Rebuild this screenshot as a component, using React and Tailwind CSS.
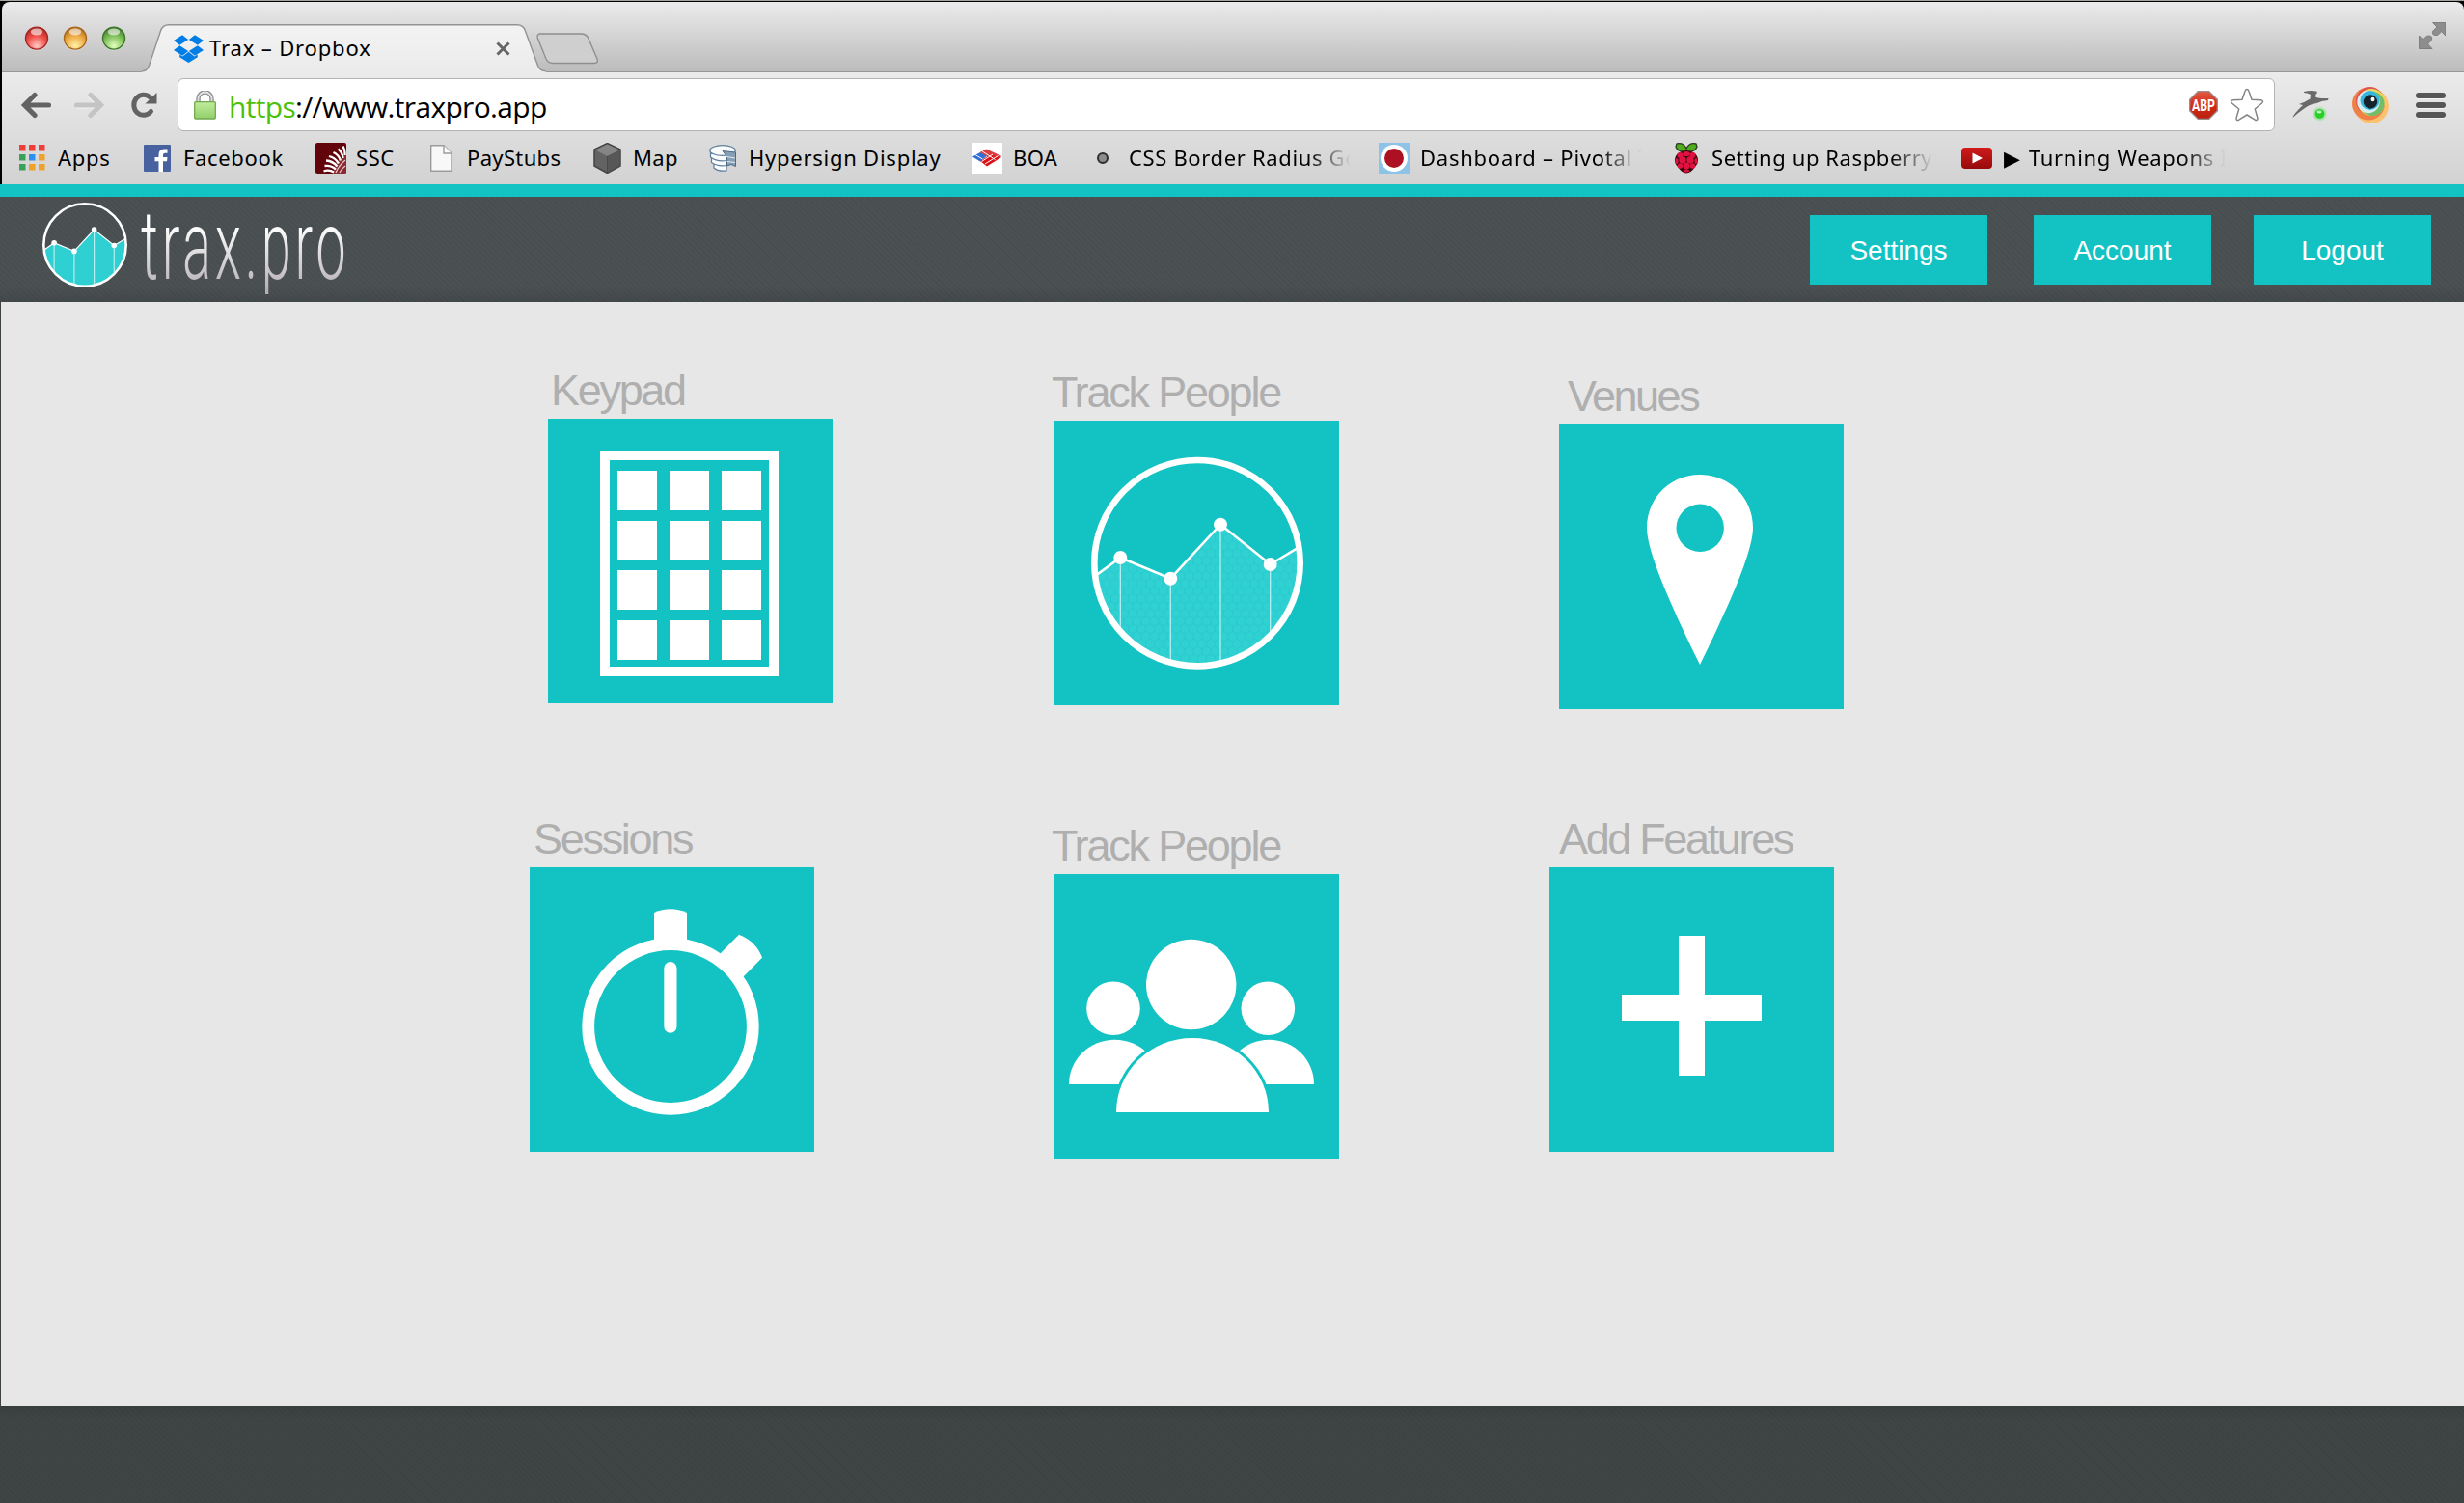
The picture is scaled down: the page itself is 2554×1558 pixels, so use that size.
import React from "react";

/* ---------- browser chrome icons ---------- */

const TrafficLight = ({ id, dark, mid, light }) => (
  <svg className="h-[26px] w-[26px]" viewBox="0 0 26 26">
    <defs>
      <radialGradient id={id} cx="50%" cy="85%" r="85%">
        <stop offset="0" stopColor={light} />
        <stop offset="0.55" stopColor={mid} />
        <stop offset="1" stopColor={dark} />
      </radialGradient>
    </defs>
    <circle cx="13" cy="13.6" r="12" fill="#fff" opacity="0.4" />
    <circle cx="13" cy="12.6" r="11.5" fill={`url(#${id})`} stroke={dark} strokeWidth="1.4" />
    <ellipse cx="13" cy="6" rx="6.2" ry="3.4" fill="#fff" opacity="0.6" />
  </svg>
);

const DropboxIcon = () => (
  <svg className="h-[29px] w-[31px]" viewBox="0 0 31 29" fill="#007ee5">
    <path d="M9 .2 15.2 5 6.2 10.8 0 6Z" />
    <path d="M22 .2 31 6 24.8 10.8 15.8 5Z" />
    <path d="M6.2 11.2 15.2 17 9 21.8 0 16Z" />
    <path d="M24.8 11.2 31 16 22 21.8 15.8 17Z" />
    <path d="M15.5 17.8 21.6 22.6 24.8 20.6V23.2L15.5 29 6.2 23.2V20.6L9.3 22.6Z" />
  </svg>
);

const TabShape = () => (
  <svg className="absolute inset-0 h-[50px] w-[419px]" viewBox="0 0 419 50">
    <defs>
      <linearGradient id="tabFill" x1="0" y1="0" x2="0" y2="1">
        <stop offset="0" stopColor="#f3f3f3" />
        <stop offset="1" stopColor="#ebebeb" />
      </linearGradient>
    </defs>
    <path
      d="M0 48.8C5 48.8 6.500 46 7.500 43L19.500 7C21 2.500 23.500.800 28 .800H389C393.500.800 396 2.500 397.500 7L410.500 43C412 47 414 48.800 419 48.800V50H0Z"
      fill="url(#tabFill)"
    />
    <path
      d="M0 48.8C5 48.8 6.500 46 7.500 43L19.500 7C21 2.500 23.500.800 28 .800H389C393.500.800 396 2.500 397.500 7L410.500 43C412 47 414 48.800 419 48.800"
      fill="none"
      stroke="#939393"
      strokeWidth="1.4"
    />
  </svg>
);

const NewTabShape = () => (
  <svg className="h-[33px] w-[65px]" viewBox="0 0 65 33">
    <path
      d="M4 1H46Q52 1 54 6L63 27Q64.500 31.500 60 31.500H17Q12 31.500 10 27L1.500 6Q0 1 4 1Z"
      fill="#cfcfcf"
      stroke="#8f8f8f"
      strokeWidth="1.4"
    />
  </svg>
);

const FullscreenIcon = () => (
  <svg className="h-7 w-7" viewBox="0 0 28 28" fill="#8d8d8d" stroke="#747474" strokeWidth="0.8">
    <path d="M28 .5V14L23.700 9.800 19.500 13.500Q16 14 14.800 12.500 14 11 14.800 9L19 5 14.500.500Z" />
    <path d="M.5 27.500V14L4.500 18 8.500 14.300Q12 13.500 13.300 15 14 17 13.300 18.500L9.500 22.800 14 27.500Z" />
  </svg>
);

const ArrowIcon = ({ flip, color, highlight }) => (
  <svg className={flip ? "h-7 w-[31px] -scale-x-100" : "h-7 w-[31px]"} viewBox="0 0 31 28">
    <path d="M14.500 4.500 4 15l10.500 10.500M5 15h24" fill="none" stroke={highlight} strokeWidth="5" />
    <path
      d="M14 3.500 3.500 14 14 24.500M4.500 14h24"
      fill="none"
      stroke={color}
      strokeWidth="5.200"
      strokeLinecap="round"
    />
  </svg>
);

const ReloadIcon = () => (
  <svg className="h-7 w-7" viewBox="0 0 28 28">
    <path d="M21.500 20.500A10 10.500 0 1 1 20.500 6" fill="none" stroke="#636363" strokeWidth="5" strokeLinecap="round" />
    <path d="M27.500 1V12.500H15.500Z" fill="#636363" />
  </svg>
);

const LockIcon = () => (
  <svg className="h-[30px] w-[23px]" viewBox="0 0 23 30">
    <defs>
      <linearGradient id="lockFill" x1="0" y1="0" x2="0" y2="1">
        <stop offset="0" stopColor="#c0ec9d" />
        <stop offset="1" stopColor="#92cf6b" />
      </linearGradient>
    </defs>
    <path d="M4.500 13V8.500a7 7 0 0 1 14 0V13" fill="none" stroke="#8e8e8e" strokeWidth="4.400" />
    <path d="M4.500 13V8.500a7 7 0 0 1 14 0V13" fill="none" stroke="#e2e2e2" strokeWidth="1.800" />
    <rect x=".7" y="11.700" width="21.600" height="17.300" rx="1" fill="url(#lockFill)" stroke="#6fa94d" strokeWidth="1.300" />
  </svg>
);

const AbpIcon = () => (
  <svg className="h-8 w-8" viewBox="0 0 32 32">
    <defs>
      <linearGradient id="abpFill" x1="0" y1="0" x2="0" y2="1">
        <stop offset="0" stopColor="#e2553f" />
        <stop offset="0.6" stopColor="#cf2812" />
        <stop offset="1" stopColor="#b92310" />
      </linearGradient>
    </defs>
    <path d="M10 1h12l9 9v12l-9 9H10l-9-9V10Z" fill="#9a8f8f" />
    <path d="M10.600 2.300h10.800l8.300 8.300v10.800l-8.300 8.300H10.600l-8.300-8.300V10.600Z" fill="url(#abpFill)" />
    <text
      x="16"
      y="21.500"
      textAnchor="middle"
      textLength="24"
      lengthAdjust="spacingAndGlyphs"
      fill="#fff"
      className="font-['Roboto',sans-serif] text-[16.5px] font-bold"
    >
      ABP
    </text>
  </svg>
);

const StarIcon = () => (
  <svg className="h-[35px] w-9" viewBox="0 0 36 35">
    <path
      d="M18 1.500Q19.500 1.500 20.200 4L23 12.200 32.500 12.700Q36 13.500 33.500 16L26.300 22 29 31.500Q29 34.500 26.300 33.200L18 28 9.700 33.200Q7 34.500 7 31.500L9.700 22 2.500 16Q0 13.500 3.500 12.700L13 12.200 15.800 4Q16.500 1.500 18 1.500Z"
      fill="#fff"
      stroke="#858585"
      strokeWidth="1.500"
    />
  </svg>
);

const BirdIcon = () => (
  <svg className="h-[34px] w-[38px]" viewBox="0 0 38 34">
    <defs>
      <radialGradient id="birdGlow">
        <stop offset="0.5" stopColor="#4de34d" stopOpacity="0.7" />
        <stop offset="1" stopColor="#4de34d" stopOpacity="0" />
      </radialGradient>
    </defs>
    <path
      d="M12 2Q18 .5 25 1.500 27 3 24.500 4.500L24 7.500Q28 9.500 37.500 9L37 11Q30 11.500 25.500 14 18 15 13 19 7 23 .5 29 .5 26 11 16L7 15Q13 13 18.500 9.500L19 5Q17 3.500 12 3Z"
      fill="#6a6a6a"
    />
    <circle cx="28.500" cy="25" r="8" fill="url(#birdGlow)" />
    <circle cx="28.500" cy="25" r="4.800" fill="#27cf27" />
    <ellipse cx="28" cy="23" rx="2.500" ry="1.400" fill="#c9ffc2" />
  </svg>
);

const EyeIcon = () => (
  <svg className="h-[38px] w-[38px]" viewBox="0 0 38 38">
    <circle cx="20" cy="20" r="18" fill="#fbc36f" />
    <circle cx="17" cy="17.500" r="17" fill="#ef8148" />
    <circle cx="18.500" cy="14.500" r="14.500" fill="#e4524f" />
    <circle cx="20" cy="16" r="14" fill="#e8d75b" />
    <circle cx="21" cy="17.500" r="12.500" fill="#71bd68" />
    <circle cx="17" cy="15.500" r="11.700" fill="#d5edf3" />
    <circle cx="18.500" cy="14" r="10" fill="#35b5da" />
    <circle cx="19" cy="15.500" r="7.200" fill="#17232b" />
    <ellipse cx="21.500" cy="13" rx="2" ry="2.300" fill="#fff" />
  </svg>
);

const MenuIcon = () => (
  <svg className="h-7 w-[31px]" viewBox="0 0 31 28">
    {[1, 11, 21].map((y) => (
      <g key={y}>
        <rect x="0" y={y + 1} width="31" height="6" rx="3" fill="#fff" opacity="0.6" />
        <rect x="0" y={y} width="31" height="6" rx="3" fill="#565656" />
      </g>
    ))}
  </svg>
);

/* ---------- bookmark icons ---------- */

const AppsGrid = () => {
  const colors = ["#f03e3a", "#f03e3a", "#f03e3a", "#3ba059", "#2c8ef0", "#f0a127", "#3ba059", "#f0a127", "#f0a127"];
  return (
    <svg className="h-[27px] w-[27px]" viewBox="0 0 27 27">
      {colors.map((c, i) => (
        <rect key={i} x={(i % 3) * 10} y={Math.floor(i / 3) * 10} width="6.500" height="6.500" fill={c} />
      ))}
    </svg>
  );
};

const FacebookIcon = () => (
  <svg className="h-7 w-7" viewBox="0 0 28 28">
    <rect width="28" height="28" rx="1" fill="#48629f" />
    <path d="M15.500 28V17.300H11.500V13H15.500V10.500Q15.500 4.500 21 4.500H24.500V8.800H22Q20 8.800 20 10.700V13H24.500L24 17.300H20V28Z" fill="#fff" />
  </svg>
);

const SscIcon = () => (
  <svg className="h-8 w-8" viewBox="0 0 32 32">
    <rect width="32" height="32" rx="2" fill="#62040b" />
    <path d="M31 12Q18 20 18 32H32V12Z" fill="#9a3a40" opacity="0.7" />
    <g fill="none" stroke="#fff" strokeWidth="2.300">
      <path d="M8.500 29.500Q14 27.500 19 30.500" />
      <path d="M9.500 24Q16 23 21 27.500" />
      <path d="M11 18.500Q18 19 22.500 24.500" />
      <path d="M14 14Q20.500 15.500 24 21.500" />
      <path d="M18.500 10Q24 12.500 26 18.500" />
      <path d="M23.500 6.500Q28 10 28.500 16" />
      <path d="M28.500 3.500Q31 8 30.500 13" />
    </g>
    <g fill="none" stroke="#e9c9cb" strokeWidth="1.200">
      <path d="M21 31Q24 24 31 18M25 31Q27 27 31 24" />
    </g>
  </svg>
);

const PageIcon = () => (
  <svg className="h-7 w-[23px]" viewBox="0 0 23 28">
    <path d="M.7.700H14L22 9V27.300H.700Z" fill="#f8f8f8" stroke="#9b9b9b" strokeWidth="1.400" />
    <path d="M14 .7V9H22" fill="#fff" stroke="#9b9b9b" strokeWidth="1.400" />
  </svg>
);

const HexIcon = () => (
  <svg className="h-8 w-[29px]" viewBox="0 0 29 32">
    <path d="M14.500.500 28 7V24L14.500 31.500 1 24V7Z" fill="#636363" stroke="#444" strokeWidth="1.500" />
    <path d="M14.500 1.500 27 7.500 14.500 14 2 7.500Z" fill="#858585" />
    <path d="M14.500 14V31L27.500 23.500V7.500Z" fill="#575757" />
    <path d="M14.500 14V31" stroke="#4a4a4a" />
  </svg>
);

const DatabaseIcon = () => (
  <svg className="h-7 w-7" viewBox="0 0 28 28">
    <g fill="#fafbfc" stroke="#5d7f9e" strokeWidth="1.200">
      <path d="M5 19.500V24Q9 28 18 27V21Z" />
      <path d="M2.500 14V18.500Q9 23 18 21.500V15Z" />
      <path d="M1.500 9V13Q8 18 18 16.500V10Z" />
      <ellipse cx="14" cy="6" rx="13.300" ry="5.300" />
    </g>
    <path d="M14 6.500 27.500 8V22.500L23 20.500 18.500 22V12.500Z" fill="#869fb5" stroke="#4c6b88" strokeWidth="1" />
    <path d="M18 12.500 27 14M18.500 17.500 27 18.500" stroke="#e6edf3" strokeWidth="1" />
  </svg>
);

const BoaIcon = () => (
  <svg className="h-8 w-8" viewBox="0 0 32 32">
    <rect width="32" height="32" fill="#fff" />
    <path d="M1 14.500 9 10 16 13.500 9 19.500Z" fill="#2f6fd8" />
    <path d="M8.500 10 15.500 6.500 31.500 14 24 18 Z" fill="#dd3b3f" />
    <path d="M9 19 19 12.500 31 15 16 24.500Z" fill="#d9151b" />
    <path d="M4 12.500 11.500 17M11 8.800 24.500 17.500M10.500 19.500 22 12M14 22 27.500 13.500" stroke="#fff" strokeWidth="1" fill="none" />
  </svg>
);

const DotIcon = () => (
  <svg className="h-3 w-3" viewBox="0 0 12 12">
    <circle cx="6" cy="6" r="5" fill="#8c8c8c" stroke="#2e2e2e" strokeWidth="2" />
  </svg>
);

const PivotalIcon = () => (
  <svg className="h-8 w-8" viewBox="0 0 32 32">
    <rect width="32" height="32" fill="#8cc3e6" />
    <circle cx="16" cy="16" r="14" fill="#fff" />
    <circle cx="16" cy="16" r="10" fill="#ad1022" />
  </svg>
);

const RaspberryIcon = () => (
  <svg className="h-8 w-[26px]" viewBox="0 0 26 32">
    <path d="M13 9Q4 10 2 4L3 1Q10-.5 13 6 16-.5 23 1L24 4Q22 10 13 9Z" fill="#4fae1b" stroke="#2b3c1f" strokeWidth="1.300" />
    <path d="M13 8Q22 9 24 14 27 20 22 25 18 31 13 31.500 8 31 4 25-1 20 2 14 4 9 13 8Z" fill="#3c0712" />
    <g fill="#e0123f">
      <ellipse cx="13" cy="11.500" rx="3.800" ry="2.600" />
      <circle cx="6.500" cy="13" r="3" />
      <circle cx="19.500" cy="13" r="3" />
      <circle cx="9" cy="18" r="3.700" />
      <circle cx="17" cy="18" r="3.700" />
      <ellipse cx="3" cy="19" rx="1.600" ry="3" />
      <ellipse cx="23" cy="19" rx="1.600" ry="3" />
      <circle cx="6.500" cy="24" r="2.700" />
      <circle cx="19.500" cy="24" r="2.700" />
      <circle cx="13" cy="24" r="3.500" />
      <ellipse cx="13" cy="29" rx="3" ry="1.600" />
    </g>
  </svg>
);

const YoutubeIcon = () => (
  <svg className="h-[22px] w-8" viewBox="0 0 32 22">
    <defs>
      <linearGradient id="ytFill" x1="0" y1="0" x2="0" y2="1">
        <stop offset="0" stopColor="#d01b1b" />
        <stop offset="1" stopColor="#960a0a" />
      </linearGradient>
    </defs>
    <rect width="32" height="22" rx="4" fill="url(#ytFill)" />
    <path d="M11.500 5.500V16.500L22 11Z" fill="#fff" />
  </svg>
);

const bookmarks = [
  { label: "Apps", icon: <AppsGrid />, box: "w-[129px]", lead: "w-[40px]", text: "tracking-[0.7px]" },
  { label: "Facebook", icon: <FacebookIcon />, box: "w-[178px]", lead: "w-[41px]", text: "tracking-[0.65px]" },
  { label: "SSC", icon: <SscIcon />, box: "w-[119px]", lead: "w-[42px]", text: "tracking-[0.6px]" },
  { label: "PayStubs", icon: <PageIcon />, box: "w-[169px]", lead: "w-[38px]", text: "tracking-[0.35px]" },
  { label: "Map", icon: <HexIcon />, box: "w-[120px]", lead: "w-[41px]", text: "tracking-[0.3px]" },
  { label: "Hypersign Display", icon: <DatabaseIcon />, box: "w-[272px]", lead: "w-[41px]", text: "tracking-[0.75px]" },
  { label: "BOA", icon: <BoaIcon />, box: "w-[130px]", lead: "w-[43px]", text: "tracking-[0.4px]" },
  { label: "CSS Border Radius Generator", icon: <DotIcon />, box: "w-[292px]", lead: "w-[33px]", text: "tracking-[0.65px]", fade: true },
  { label: "Dashboard – Pivotal Tracker", icon: <PivotalIcon />, box: "w-[306px]", lead: "w-[43px]", text: "tracking-[0.75px]", fade: true },
  { label: "Setting up Raspberry Pi", icon: <RaspberryIcon />, box: "w-[298px]", lead: "w-[39px]", text: "tracking-[0.6px]", fade: true },
  { label: "Turning Weapons Into", icon: <YoutubeIcon />, box: "w-[290px]", lead: "w-[44px]", text: "tracking-[0.7px]", fade: true, play: true },
];

const Bookmark = ({ label, icon, box, lead, text, fade, play }) => (
  <div className={`flex shrink-0 items-center ${box}`}>
    <span className={`flex shrink-0 items-center ${lead}`}>{icon}</span>
    <span
      className={`-mt-[2px] overflow-hidden whitespace-nowrap ${text} ${
        fade ? "w-[232px] [mask-image:linear-gradient(to_right,black_80%,transparent_99%)]" : ""
      }`}
    >
      {play && <span className="mr-[9px] font-['DejaVu_Sans',sans-serif] leading-none tracking-normal">▶</span>}
      {label}
    </span>
  </div>
);

function BrowserChrome() {
  return (
    <div className="bg-black pl-[2px] font-['Noto_Sans',sans-serif] text-[22px] leading-[30px] text-black">
      <div className="-ml-[2px] h-px bg-[#a3a59f]" />
      <div className="h-px bg-black" />
      <div className="flex h-[73px] items-end rounded-t-[8px] border-b border-[#979797] bg-linear-to-b from-[#ebebeb] to-[#bcbcbc]">
        <div className="flex gap-[14px] self-start pt-[25px] pl-[23px]">
          <TrafficLight id="closeLight" dark="#a32622" mid="#f04d48" light="#ffc9c4" />
          <TrafficLight id="minLight" dark="#a9671c" mid="#eeab45" light="#fff2a6" />
          <TrafficLight id="zoomLight" dark="#3d7628" mid="#7fc15a" light="#e2ffbf" />
        </div>
        <div className="relative -mb-px ml-[16px] h-[50px] w-[419px]">
          <TabShape />
          <div className="relative flex h-[50px] items-center pr-[37px] pl-[33px]">
            <DropboxIcon />
            <span className="-mt-[2px] ml-[6px] tracking-[0.85px]">Trax – Dropbox</span>
            <svg className="ml-auto h-[15px] w-[15px]" viewBox="0 0 15 15">
              <path d="M1.500 1.500 13.500 13.500M13.500 1.500 1.500 13.500" stroke="#666" strokeWidth="3" />
            </svg>
          </div>
        </div>
        <div className="-ml-[10px] self-start pt-[32px]">
          <NewTabShape />
        </div>
        <div className="mr-[19px] ml-auto self-start pt-[21px]">
          <FullscreenIcon />
        </div>
      </div>

      <div className="bg-linear-to-b from-[#ebebeb] to-[#d2d2d2]">
        <div className="flex items-center pt-[6px] pl-5">
          <ArrowIcon color="#636363" highlight="#f6f6f6" />
          <div className="ml-[24px]">
            <ArrowIcon flip color="#c4c4c4" highlight="#f4f4f4" />
          </div>
          <div className="ml-[27px]">
            <ReloadIcon />
          </div>
          <div className="ml-[21px] flex h-[55px] w-[2174px] items-center rounded-[6px] border border-[#b3b5b1] bg-white pr-[10px] pl-4">
            <LockIcon />
            <span className="ml-[13px] pt-[5px] font-['Open_Sans',sans-serif] text-[30px] tracking-[-0.68px]">
              <span className="text-[#4cc00a]">https</span>://www.traxpro.app
            </span>
            <div className="ml-auto flex items-center gap-[11px]">
              <AbpIcon />
              <StarIcon />
            </div>
          </div>
          <div className="ml-[18px] pt-[2px]">
            <BirdIcon />
          </div>
          <div className="ml-[24px]">
            <EyeIcon />
          </div>
          <div className="ml-[28px]">
            <MenuIcon />
          </div>
        </div>
        <div className="flex h-[55px] items-center pl-[18px]">
          {bookmarks.map((b) => (
            <Bookmark key={b.label} {...b} />
          ))}
        </div>
      </div>
    </div>
  );
}

/* ---------- application ---------- */

const chartPoints = [
  [68.3, 142],
  [120.3, 163.7],
  [172, 107.7],
  [223.7, 149],
];

const ChartEmblem = ({ id, className, viewBox, ring, line, stem, dot }) => (
  <svg className={className} viewBox={viewBox}>
    <defs>
      <clipPath id={id}>
        <circle cx="148" cy="147.700" r="107" />
      </clipPath>
      <pattern id={`${id}-hex`} width="9" height="15.600" patternUnits="userSpaceOnUse">
        <path d="M0 2.600 4.500 0 9 2.600V7.800L4.500 10.400 0 7.800ZM4.500 10.400V15.600" fill="none" stroke="#25c4c6" strokeWidth="0.600" />
      </pattern>
    </defs>
    <g clipPath={`url(#${id})`}>
      <path d="M38 164 68.300 142 120.300 163.700 172 107.700 223.700 149 258 128.500V260H38Z" fill="#2fd1d3" />
      <path d="M38 164 68.300 142 120.300 163.700 172 107.700 223.700 149 258 128.500V260H38Z" fill={`url(#${id}-hex)`} />
      {chartPoints.map(([x, y]) => (
        <path key={x} d={`M${x} ${y}V260`} stroke="#fff" strokeWidth={stem} opacity="0.650" />
      ))}
      <path d="M38 164 68.300 142 120.300 163.700 172 107.700 223.700 149 258 128.500" fill="none" stroke="#fff" strokeWidth={line} />
    </g>
    {chartPoints.map(([x, y]) => (
      <circle key={x} cx={x} cy={y} r={dot} fill="#fff" />
    ))}
    <circle cx="148" cy="147.700" r={110 - ring / 2} fill="none" stroke="#fff" strokeWidth={ring} />
  </svg>
);

const tileSvg = "block h-[295px] w-[295px]";

const KeypadIcon = () => (
  <svg className={tileSvg} viewBox="0 0 295 295" shapeRendering="crispEdges">
    <rect x="59" y="38" width="175" height="224" fill="none" stroke="#fff" strokeWidth="10" />
    {[54, 106, 157, 209].map((y) =>
      [72, 126, 180].map((x) => <rect key={`${x}-${y}`} x={x} y={y} width="41" height="41" fill="#fff" />)
    )}
  </svg>
);

const PinIcon = () => (
  <svg className={tileSvg} viewBox="0 0 295 295">
    <path
      fillRule="evenodd"
      fill="#fff"
      d="M146 52C176.500 52 201 76 201 107C201 130 180 180 146 249C112 180 91 130 91 107C91 76 115.500 52 146 52ZM146.200 82.500a24.700 24.700 0 1 0 0 49.400a24.700 24.700 0 1 0 0-49.400Z"
    />
  </svg>
);

const StopwatchIcon = () => (
  <svg className={tileSvg} viewBox="0 0 295 295" fill="#fff">
    <circle cx="146" cy="165" r="85.300" fill="none" stroke="#fff" strokeWidth="12.800" />
    <path d="M129 47Q146 39.500 163 47V82H129Z" />
    <path d="M217 69.700Q235 77 241 93.700L220 115 196 91Z" />
    <rect x="139.300" y="98" width="13.200" height="73.700" rx="6.600" />
  </svg>
);

const PeopleIcon = () => (
  <svg className={tileSvg} viewBox="0 0 295 295" fill="#fff">
    <circle cx="61" cy="139.300" r="27.800" />
    <circle cx="221.300" cy="139.300" r="27.800" />
    <path d="M15 218A47.500 46.300 0 0 1 110 218Z" />
    <path d="M176 218A46.500 46.300 0 0 1 269 218Z" />
    <path d="M61 247A82 80 0 0 1 225 247Z" fill="#13c2c2" />
    <circle cx="141.700" cy="114.500" r="46.700" />
    <path d="M64 247A79 77 0 0 1 222 247Z" />
  </svg>
);

const PlusIcon = () => (
  <svg className={tileSvg} viewBox="0 0 295 295" fill="#fff" shapeRendering="crispEdges">
    <rect x="134" y="71" width="27" height="145" />
    <rect x="75" y="132" width="145" height="27" />
  </svg>
);

const Tile = ({ label, place, inset, children }) => (
  <div className={`w-[295px] shrink-0 ${place}`}>
    <div className={`h-[53px] text-[45px] leading-[48px] whitespace-nowrap text-[#afafaf] ${inset}`}>{label}</div>
    <div className="h-[295px] w-[295px] bg-[#13c2c2]">{children}</div>
  </div>
);

const NavButton = ({ children, className = "" }) => (
  <button className={`h-[72px] w-[184px] bg-[#13c2c2] pt-[2px] text-center text-[28px] text-white ${className}`}>{children}</button>
);

const weave =
  "bg-[repeating-linear-gradient(45deg,rgba(0,0,0,0.05)_0px,rgba(0,0,0,0.05)_1px,transparent_1px,transparent_4px)]";

export default function App() {
  return (
    <div className="flex h-[1558px] w-[2554px] flex-col overflow-hidden bg-[#3e4344] font-['Liberation_Sans',Arial,sans-serif]">
      <BrowserChrome />

      <header className="h-[122px] border-t-[13px] border-[#13c2c2] bg-linear-to-b from-[#4b5153] from-85% to-[#43484b]">
        <div className={`flex h-[109px] items-start pr-[34px] pl-[44px] ${weave}`}>
          <ChartEmblem
            id="logoClip"
            className="mt-[6px] h-[88px] w-[88px]"
            viewBox="38 37.7 220 220"
            ring={6.5}
            line={3}
            stem={3}
            dot={7}
          />
          <div className="ml-[14px] h-[109px] w-[215px]">
            <span className="inline-block origin-left scale-x-[0.56] bg-linear-to-b from-white from-30% to-[#b5b0b4] to-95% bg-clip-text font-['Roboto',sans-serif] text-[100px] leading-[101px] font-light tracking-[6.500px] whitespace-nowrap text-transparent">
              trax.pro
            </span>
          </div>
          <nav className="mt-[19px] ml-auto flex">
            <NavButton>Settings</NavButton>
            <NavButton className="ml-12">Account</NavButton>
            <NavButton className="ml-11">Logout</NavButton>
          </nav>
        </div>
      </header>

      <main className="h-[1144px] border-l border-[#3e4344] bg-[#e7e7e7]">
        <div className="flex h-[533px] items-start pt-[68px] pl-[567px]">
          <Tile label="Keypad" inset="pl-[3px] tracking-[-2.3px]" place="">
            <KeypadIcon />
          </Tile>
          <Tile label="Track People" inset="-ml-[3px] tracking-[-2.2px]" place="ml-[230px] mt-[2px]">
            <ChartEmblem
              id="tileClip"
              className={tileSvg}
              viewBox="0 0 295 295"
              ring={6.6}
              line={2.6}
              stem={1.3}
              dot={7}
            />
          </Tile>
          <Tile label="Venues" inset="pl-[9px] tracking-[-2.5px]" place="ml-[228px] mt-[6px]">
            <PinIcon />
          </Tile>
        </div>
        <div className="flex items-start pl-[548px]">
          <Tile label="Sessions" inset="pl-[4px] tracking-[-2.3px]" place="">
            <StopwatchIcon />
          </Tile>
          <Tile label="Track People" inset="-ml-[3px] tracking-[-2.2px]" place="ml-[249px] mt-[7px]">
            <PeopleIcon />
          </Tile>
          <Tile label="Add Features" inset="pl-[10px] tracking-[-2.35px]" place="ml-[218px]">
            <PlusIcon />
          </Tile>
        </div>
      </main>

      <footer className="flex-1 bg-linear-to-b from-[#393e3f] to-[#3f4445] to-15%">
        <div className={`h-full ${weave}`} />
      </footer>
    </div>
  );
}
